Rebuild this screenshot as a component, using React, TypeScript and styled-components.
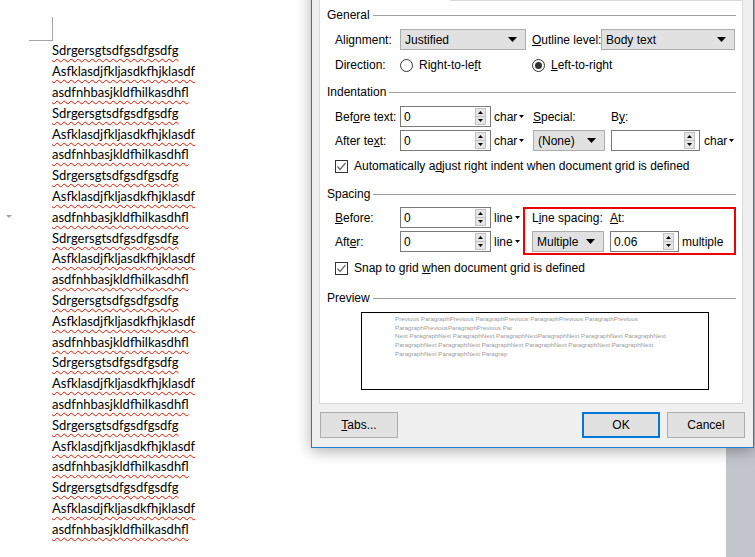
import React from 'react';
import styled, { createGlobalStyle } from 'styled-components';

const Global = createGlobalStyle`
  html, body { margin: 0; padding: 0; background: #fff; }
  body { width: 755px; height: 557px; overflow: hidden; }
  #root { width: 755px; height: 557px; }
`;

const Screen = styled.div`
  position: relative;
  width: 755px;
  height: 557px;
  overflow: hidden;
  display: flex;
  background: #fff;
`;

const Page = styled.div`
  width: 726px;
  flex: none;
  background: #fff;
  padding-top: 17px;
  box-sizing: border-box;
`;

const Backdrop = styled.div`
  flex: 1;
  background: #c2c5cc;
`;

const CropMark = styled.div`
  margin-left: 29px;
  width: 23px;
  height: 23px;
  border-right: 1px solid #a6a6a6;
  border-bottom: 1px solid #a6a6a6;
`;

const DocLines = styled.div`
  margin-top: -1px;
`;

const DocLine = styled.div`
  display: flex;
  align-items: center;
  height: 20.8px;
`;

const Gutter = styled.div`
  width: 52px;
  flex: none;
  display: flex;
  align-items: center;
  padding-left: 6px;
  box-sizing: border-box;
`;

const Marker = styled.div`
  width: 0;
  height: 0;
  border-left: 3px solid transparent;
  border-right: 3px solid transparent;
  border-top: 3px solid #a6a6a6;
`;

const DocText = styled.span`
  font-family: Lato, "Liberation Sans", sans-serif;
  font-size: 13px;
  color: #000;
  text-decoration: underline wavy #e51400;
  text-decoration-thickness: 1px;
  text-underline-offset: 3px;
  white-space: nowrap;
`;

/* ---------- dialog ---------- */

const Dialog = styled.div`
  position: absolute;
  left: 311px;
  top: -25px;
  width: 443px;
  height: 473px;
  box-sizing: border-box;
  background: #f0f0f0;
  border: 1px solid #1a7fd4;
  box-shadow: 0 3px 14px rgba(0, 0, 0, 0.32);
  display: flex;
  flex-direction: column;
  padding-left: 7px;
  font-family: "Liberation Sans", Arial, sans-serif;
  font-size: 12px;
  color: #000;
`;

const TabRow = styled.div`
  height: 24px;
  display: flex;
  align-items: flex-end;
  flex: none;
`;

const SelectedTab = styled.div`
  width: 132px;
  height: 25px;
  margin-bottom: -1px;
  box-sizing: border-box;
  background: #fff;
  border: 1px solid #d9d9d9;
  border-bottom: none;
  position: relative;
  z-index: 1;
`;

const Panel = styled.div`
  width: 424px;
  height: 404px;
  flex: none;
  box-sizing: border-box;
  background: #fff;
  border: 1px solid #d9d9d9;
  padding: 0 6px 0 7px;
  display: flex;
  flex-direction: column;
`;

const GroupHeader = styled.div<{ $mt: number }>`
  margin-top: ${(p) => p.$mt}px;
  height: 16px;
  display: flex;
  align-items: center;
  gap: 3px;
  flex: none;
  &::after {
    content: '';
    flex: 1;
    height: 1px;
    background: #a0a0a0;
  }
`;

const Row = styled.div<{ $mt?: number; $h?: number }>`
  margin-top: ${(p) => p.$mt ?? 0}px;
  height: ${(p) => p.$h ?? 21}px;
  padding-left: 8px;
  display: flex;
  align-items: center;
  flex: none;
  white-space: nowrap;
`;

const Label = styled.span<{ $w?: number }>`
  width: ${(p) => (p.$w ? `${p.$w}px` : 'auto')};
  flex: none;
`;

const Select = styled.div<{ $w: number; $mr?: number }>`
  width: ${(p) => p.$w}px;
  margin-right: ${(p) => p.$mr ?? 0}px;
  height: 21px;
  box-sizing: border-box;
  background: #e1e1e1;
  border: 1px solid #adadad;
  display: flex;
  align-items: center;
  padding: 0 8px 0 4px;
  flex: none;
`;

const SelectValue = styled.span`
  flex: 1;
`;

const SpinBox = styled.div<{ $w: number }>`
  width: ${(p) => p.$w}px;
  height: 21px;
  box-sizing: border-box;
  border: 1px solid #7a7a7a;
  background: #fff;
  display: flex;
  align-items: center;
  padding: 0 4px 0 3px;
  flex: none;
`;

const SpinValue = styled.span`
  flex: 1;
`;

const SpinButtons = styled.div`
  width: 11px;
  height: 17px;
  box-sizing: border-box;
  border: 1px solid #c2c2c2;
  background: #e6e6e6;
  display: flex;
  flex-direction: column;
`;

const SpinHalf = styled.div`
  flex: 1;
  display: flex;
  align-items: center;
  justify-content: center;
  & + & {
    border-top: 1px solid #c2c2c2;
  }
`;

const Unit = styled.span<{ $ml?: number; $w?: number }>`
  margin-left: ${(p) => p.$ml ?? 3}px;
  width: ${(p) => (p.$w ? `${p.$w}px` : 'auto')};
  display: flex;
  align-items: center;
  gap: 2px;
  flex: none;
`;

const RadioOption = styled.div<{ $w?: number }>`
  width: ${(p) => (p.$w ? `${p.$w}px` : 'auto')};
  display: flex;
  align-items: center;
  gap: 6px;
  flex: none;
`;

const RadioCircle = styled.span<{ $on?: boolean }>`
  width: 13px;
  height: 13px;
  box-sizing: border-box;
  border: 1px solid #333;
  border-radius: 50%;
  background: #fff;
  display: flex;
  align-items: center;
  justify-content: center;
  &::after {
    content: '';
    width: 7px;
    height: 7px;
    border-radius: 50%;
    background: ${(p) => (p.$on ? '#333' : 'transparent')};
  }
`;

const CheckOption = styled.div`
  display: flex;
  align-items: center;
  gap: 6px;
`;

const CheckBox = styled.span`
  width: 13px;
  height: 13px;
  box-sizing: border-box;
  border: 1px solid #333;
  background: #fff;
  display: flex;
  align-items: center;
  justify-content: center;
`;

const SpacingBlock = styled.div`
  margin-top: 5px;
  display: flex;
  align-items: flex-start;
  flex: none;
`;

const SpacingLeft = styled.div`
  width: 196px;
  display: flex;
  flex-direction: column;
  gap: 3px;
  flex: none;
`;

const RedBox = styled.div`
  width: 215px;
  height: 48px;
  box-sizing: border-box;
  border: 2px solid #ee0000;
  padding: 0 0 1px 7px;
  display: flex;
  flex-direction: column;
`;

const BoxRow = styled.div<{ $mt?: number; $h: number }>`
  margin-top: ${(p) => p.$mt ?? 0}px;
  height: ${(p) => p.$h}px;
  display: flex;
  align-items: center;
  white-space: nowrap;
`;

const PreviewBox = styled.div`
  margin: 6px 0 0 34px;
  width: 348px;
  height: 78px;
  box-sizing: border-box;
  border: 1px solid #000;
  padding: 2px 0 0 33px;
  flex: none;
`;

const PreviewLine = styled.div`
  font-size: 6.2px;
  line-height: 8.7px;
  height: 8.7px;
  color: #9a9a9a;
  white-space: pre;
`;

const ButtonRow = styled.div`
  margin-top: 8px;
  height: 26px;
  display: flex;
  padding: 0 8px 0 1px;
  flex: none;
`;

const Button = styled.div<{ $primary?: boolean; $ml?: number }>`
  width: 78px;
  height: 26px;
  margin-left: ${(p) => p.$ml ?? 0}px;
  box-sizing: border-box;
  background: #e1e1e1;
  border: ${(p) => (p.$primary ? '2px solid #0078d7' : '1px solid #adadad')};
  display: flex;
  align-items: center;
  justify-content: center;
  flex: none;
`;

const Spacer = styled.div`
  flex: 1;
`;

/* ---------- small drawings ---------- */

const DownArrow = ({ w = 9, h = 5 }: { w?: number; h?: number }) => (
  <svg width={w} height={h} viewBox={`0 0 ${w} ${h}`} style={{ display: 'block' }}>
    <polygon points={`0,0 ${w},0 ${w / 2},${h}`} fill="#000" />
  </svg>
);

const SmallArrow = ({ up }: { up?: boolean }) => (
  <svg width="5" height="3" viewBox="0 0 5 3" style={{ display: 'block' }}>
    <polygon points={up ? '0,3 5,3 2.5,0' : '0,0 5,0 2.5,3'} fill="#000" />
  </svg>
);

const Check = () => (
  <svg width="11" height="11" viewBox="0 0 11 11" style={{ display: 'block' }}>
    <polyline points="1.5,5.5 4,8.5 9.5,2" fill="none" stroke="#666" strokeWidth="1.2" />
  </svg>
);

const Spin = ({ w, value }: { w: number; value: string }) => (
  <SpinBox $w={w}>
    <SpinValue>{value}</SpinValue>
    <SpinButtons>
      <SpinHalf>
        <SmallArrow up />
      </SpinHalf>
      <SpinHalf>
        <SmallArrow />
      </SpinHalf>
    </SpinButtons>
  </SpinBox>
);

const DropSelect = ({ w, value, mr }: { w: number; value: string; mr?: number }) => (
  <Select $w={w} $mr={mr}>
    <SelectValue>{value}</SelectValue>
    <DownArrow />
  </Select>
);

const UnitDrop = ({ text, ml, w }: { text: string; ml?: number; w?: number }) => (
  <Unit $ml={ml} $w={w}>
    {text}
    <SmallArrow />
  </Unit>
);

const words = ['Sdrgersgtsdfgsdfgsdfg', 'Asfklasdjfkljasdkfhjklasdf', 'asdfnhbasjkldfhilkasdhfl'];
const docLines = Array.from({ length: 24 }, (_, i) => words[i % 3]);

const previewLines = [
  'Previous ParagraphPrevious ParagraphPrevious ParagraphPrevious ParagraphPrevious',
  'ParagraphPreviousParagraphPrevious Par',
  'Next ParagraphNext ParagraphNext ParagraphNextParagraphNext ParagraphNext ParagraphNext',
  'ParagraphNext ParagraphNext ParagraphNext ParagraphNext ParagraphNext ParagraphNext',
  'ParagraphNext ParagraphNext Paragrap',
];

export default function App() {
  return (
    <Screen>
      <Global />
      <Page>
        <CropMark />
        <DocLines>
          {docLines.map((t, i) => (
            <DocLine key={i}>
              <Gutter>{i === 8 && <Marker />}</Gutter>
              <DocText>{t}</DocText>
            </DocLine>
          ))}
        </DocLines>
      </Page>
      <Backdrop />

      <Dialog>
        <TabRow>
          <SelectedTab />
        </TabRow>
        <Panel>
          <GroupHeader $mt={6}>General</GroupHeader>
          <Row $mt={6}>
            <Label $w={65}>
              Ali<u>g</u>nment:
            </Label>
            <DropSelect w={126} value="Justified" mr={6} />
            <Label $w={69}>
              <u>O</u>utline level:
            </Label>
            <DropSelect w={134} value="Body text" />
          </Row>
          <Row $mt={5} $h={20}>
            <Label $w={65}>Direction:</Label>
            <RadioOption $w={132}>
              <RadioCircle />
              <span>
                Right-to-le<u>f</u>t
              </span>
            </RadioOption>
            <RadioOption>
              <RadioCircle $on />
              <span>
                <u>L</u>eft-to-right
              </span>
            </RadioOption>
          </Row>

          <GroupHeader $mt={9}>Indentation</GroupHeader>
          <Row $mt={6}>
            <Label $w={65}>
              Bef<u>o</u>re text:
            </Label>
            <Spin w={91} value="0" />
            <UnitDrop text="char" w={39} />
            <Label $w={78}>
              <u>S</u>pecial:
            </Label>
            <Label>
              B<u>y</u>:
            </Label>
          </Row>
          <Row $mt={3}>
            <Label $w={65}>
              After te<u>x</u>t:
            </Label>
            <Spin w={91} value="0" />
            <UnitDrop text="char" w={39} />
            <DropSelect w={72} value="(None)" mr={6} />
            <Spin w={89} value="" />
            <UnitDrop text="char" ml={4} />
          </Row>
          <Row $mt={6} $h={18}>
            <CheckOption>
              <CheckBox>
                <Check />
              </CheckBox>
              <span>
                Automatically a<u>d</u>just right indent when document grid is defined
              </span>
            </CheckOption>
          </Row>

          <GroupHeader $mt={11}>Spacing</GroupHeader>
          <SpacingBlock>
            <SpacingLeft>
              <Row>
                <Label $w={65}>
                  <u>B</u>efore:
                </Label>
                <Spin w={91} value="0" />
                <UnitDrop text="line" />
              </Row>
              <Row>
                <Label $w={65}>
                  Aft<u>e</u>r:
                </Label>
                <Spin w={91} value="0" />
                <UnitDrop text="line" />
              </Row>
            </SpacingLeft>
            <RedBox>
              <BoxRow $h={17}>
                <Label $w={78}>
                  L<u>i</u>ne spacing:
                </Label>
                <Label>
                  <u>A</u>t:
                </Label>
              </BoxRow>
              <BoxRow $mt={5} $h={21}>
                <DropSelect w={72} value="Multiple" mr={6} />
                <Spin w={69} value="0.06" />
                <Unit $ml={3}>multiple</Unit>
              </BoxRow>
            </RedBox>
          </SpacingBlock>
          <Row $mt={4} $h={18}>
            <CheckOption>
              <CheckBox>
                <Check />
              </CheckBox>
              <span>
                Snap to grid <u>w</u>hen document grid is defined
              </span>
            </CheckOption>
          </Row>

          <GroupHeader $mt={13}>Preview</GroupHeader>
          <PreviewBox>
            {previewLines.map((l, i) => (
              <PreviewLine key={i}>{l}</PreviewLine>
            ))}
          </PreviewBox>
        </Panel>
        <ButtonRow>
          <Button>
            <span>
              <u>T</u>abs...
            </span>
          </Button>
          <Spacer />
          <Button $primary>OK</Button>
          <Button $ml={7}>Cancel</Button>
        </ButtonRow>
      </Dialog>
    </Screen>
  );
}
